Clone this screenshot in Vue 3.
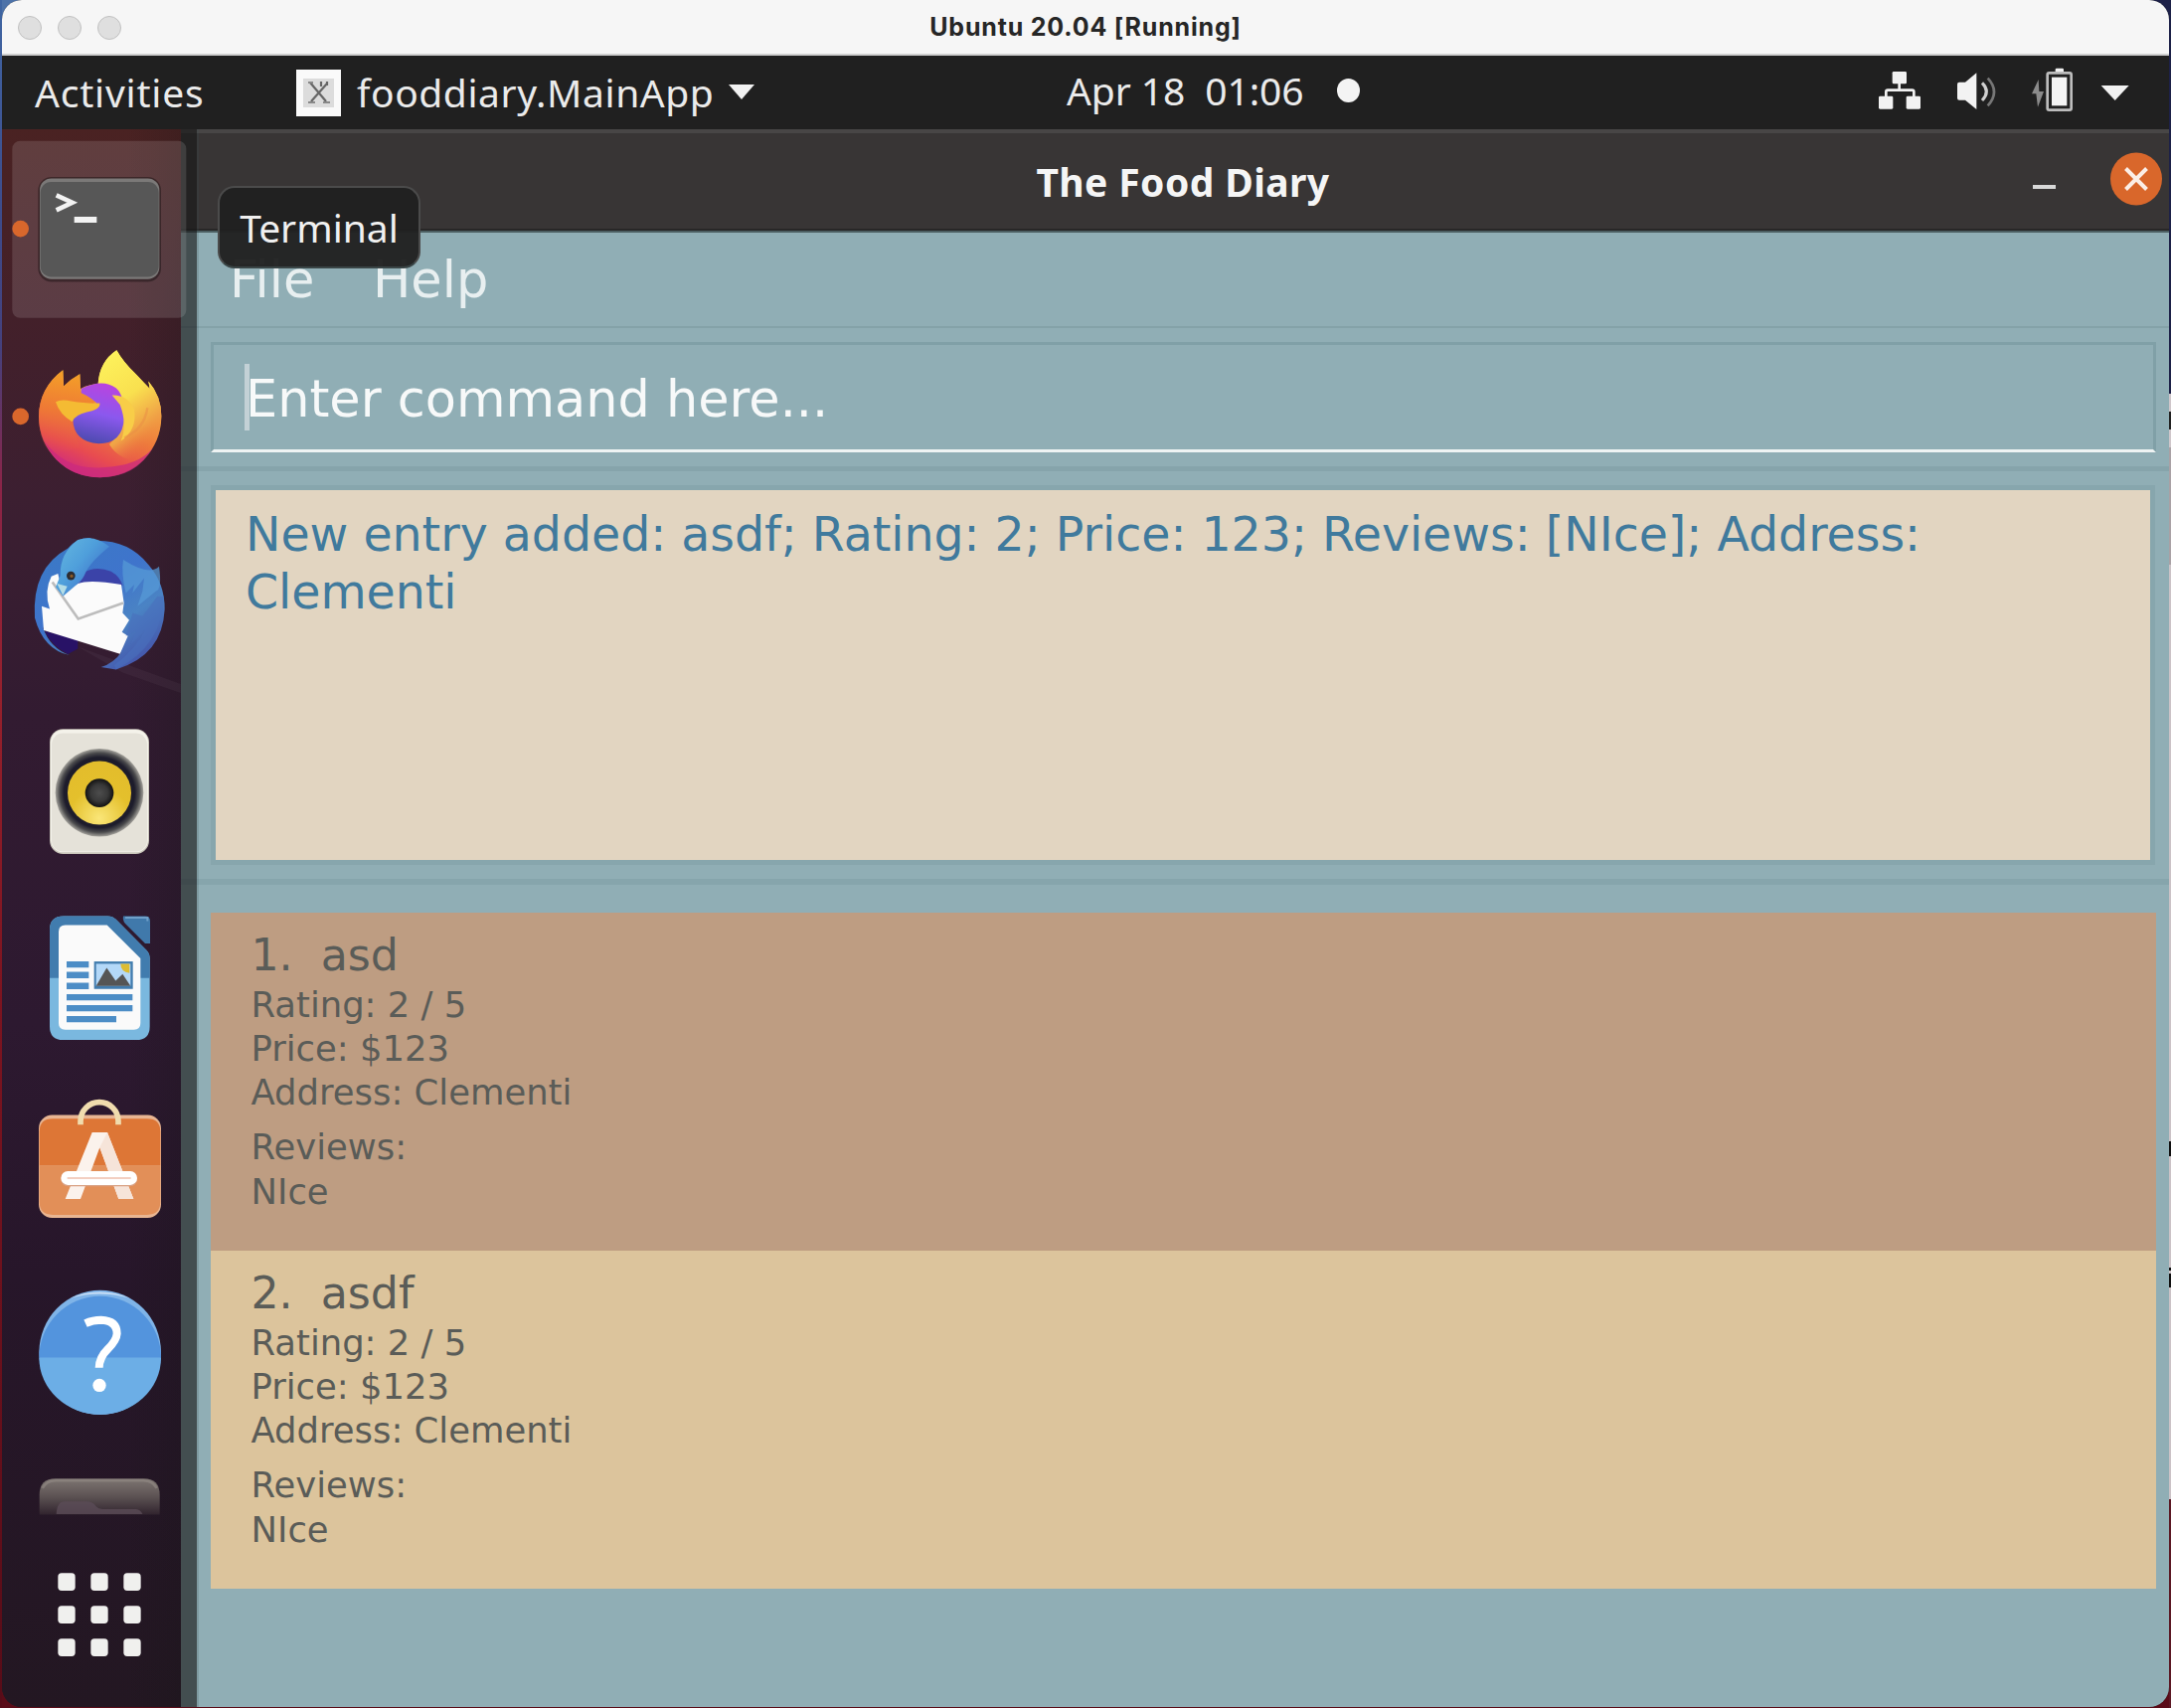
<script setup>
const entries = [
  { id: 1, name: 'asd', rating: 2, price: 123, address: 'Clementi', review: 'NIce' },
  { id: 2, name: 'asdf', rating: 2, price: 123, address: 'Clementi', review: 'NIce' },
]
const dots = [0, 1, 2]
</script>

<template>
  <div class="desktop">
    <div class="edge left"></div>
    <div class="vm">
      <header class="macbar">
        <div class="lights"><i></i><i></i><i></i></div>
        <span class="mactitle">Ubuntu 20.04 [Running]</span>
      </header>

      <div class="topbar">
        <span class="activities">Activities</span>
        <svg class="appicon" viewBox="0 0 45 47">
          <rect width="45" height="47" fill="#fafafa" />
          <rect x="7" y="9" width="31" height="29" fill="#dcdcdc" />
          <path d="M14 13l16 19M31 14L15 32M25 12v5M31 12v4" stroke="#666" stroke-width="2.2" fill="none" />
          <path d="M12 33h7M27 33h7M12 13h5" stroke="#888" stroke-width="2" />
        </svg>
        <span class="appname">fooddiary.MainApp</span>
        <svg class="caret" viewBox="0 0 28 18"><path d="M1 1h26L14 16z" fill="#f2f2f2" /></svg>
        <div class="clock"><span>Apr 18&nbsp; 01:06</span><i></i></div>
        <div class="status">
          <svg width="48" height="74" viewBox="261 168 144 222" fill="#f2f2f2">
            <rect x="311" y="216" width="43" height="37" rx="4" />
            <rect x="270" y="290" width="43" height="39" rx="4" />
            <rect x="353" y="290" width="43" height="39" rx="4" />
            <path d="M332 250v22M292 292v-15q0-5 5-5h74q5 0 5 5v15" fill="none" stroke="#f2f2f2" stroke-width="8" />
          </svg>
          <svg class="vol" width="48" height="74" viewBox="495 168 144 222" fill="none">
            <path d="M507 254q0-6 6-6h18l34-28v110l-34-28h-18q-6 0-6-6z" fill="#f2f2f2" />
            <path d="M582 250q26 26 0 53" stroke="#d0d0d0" stroke-width="9" />
            <path d="M599 236q38 41 0 83" stroke="#777" stroke-width="8" />
          </svg>
          <svg class="bat" width="48" height="74" viewBox="723 168 144 222">
            <path d="M752 240l-20 43h13l5 40 18-47h-14z" fill="#8b8b8b" />
            <rect x="803" y="206" width="25" height="14" rx="4" fill="#f2f2f2" />
            <rect x="779" y="220" width="72" height="112" rx="5" fill="none" stroke="#bdbdbd" stroke-width="8" />
            <rect x="792" y="233" width="46" height="86" fill="#f4f4f4" />
          </svg>
          <svg class="down" width="34" height="74" viewBox="933 168 102 222"><path d="M941 258h84l-42 45z" fill="#f2f2f2" /></svg>
        </div>
      </div>

      <div class="workspace">
        <aside class="dock">
          <!-- Terminal -->
          <svg class="slot" viewBox="6 18.75 540 565.5">
            <rect x="37" y="36" width="525" height="534" rx="24" fill="#fff" fill-opacity=".13" />
            <circle cx="62" cy="301" r="25" fill="#d9672c" />
            <rect x="115" y="145" width="371" height="316" rx="40" fill="#000" fill-opacity=".35" />
            <rect x="120" y="149" width="361" height="304" rx="35" fill="#7b7978" />
            <rect x="122" y="160" width="357" height="286" rx="32" fill="#575757" />
            <path d="M170 200l48 22-48 23" fill="none" stroke="#f3f3f3" stroke-width="14" />
            <path d="M224 274h68" stroke="#f3f3f3" stroke-width="18" />
          </svg>
          <!-- Firefox -->
          <svg class="slot" viewBox="6 584.25 540 565.5">
            <defs>
              <linearGradient id="fx" x1=".75" y1=".1" x2=".35" y2="1">
                <stop offset="0" stop-color="#fbe74f" /><stop offset=".3" stop-color="#f6b43c" />
                <stop offset=".55" stop-color="#ee7a3b" /><stop offset=".8" stop-color="#e84b50" /><stop offset="1" stop-color="#cf2a80" />
              </linearGradient>
              <linearGradient id="fy" x1=".2" y1="0" x2=".6" y2="1">
                <stop offset="0" stop-color="#fdf25c" /><stop offset=".45" stop-color="#f9e04f" />
                <stop offset=".75" stop-color="#f0a346" /><stop offset="1" stop-color="#e9603f" stop-opacity="0" />
              </linearGradient>
              <linearGradient id="fo" x1=".5" y1="0" x2=".4" y2="1">
                <stop offset="0" stop-color="#f4a127" /><stop offset=".5" stop-color="#ee7836" /><stop offset="1" stop-color="#e6504c" stop-opacity="0" />
              </linearGradient>
              <linearGradient id="fp" x1=".6" y1="0" x2=".4" y2="1">
                <stop offset="0" stop-color="#b944df" /><stop offset=".5" stop-color="#8b58ee" /><stop offset="1" stop-color="#4c4aae" />
              </linearGradient>
            </defs>
            <circle cx="62" cy="866" r="25" fill="#d9672c" />
            <path d="M190 726L192 775Q215 752 241 738L243 782Q270 768 296 768Q300 700 352 666Q372 702 410 738Q440 770 452 782L448 760Q487 805 487 865C487 970 405 1050 302 1050C198 1050 117 968 117 866Q118 780 190 726z" fill="url(#fx)" />
            <path d="M190 726L192 775Q215 752 241 738L243 790L290 820L215 880L240 960L150 980Q117 930 117 866Q118 780 190 726z" fill="url(#fo)" />
            <path d="M296 768Q300 700 352 666Q372 702 410 738Q440 770 452 782L448 760Q487 805 487 865Q485 950 425 1000Q360 1000 330 950Q380 900 365 830z" fill="url(#fy)" />
            <path d="M133 940Q200 1030 310 1020Q420 1015 462 960Q410 1050 302 1050Q185 1050 133 940z" fill="#cb2b7e" fill-opacity=".75" />
            <path d="M245 782Q310 750 350 780Q378 805 375 870Q370 948 298 948Q222 942 220 875L222 858L300 835Q280 810 245 795z" fill="url(#fp)" />
            <path d="M338 802Q385 800 405 845Q415 905 365 940Q385 890 362 830z" fill="#f8cd48" />
            <path d="M168 822Q185 812 215 820Q265 828 301 826Q304 845 262 853Q225 862 218 882Q180 860 168 822z" fill="#f4bb33" />
            <path d="M445 840Q435 905 375 930" fill="none" stroke="#e98c45" stroke-width="7" stroke-opacity=".5" />
          </svg>
          <!-- Thunderbird -->
          <svg class="slot" viewBox="6 39.75 540 565.5">
            <defs>
              <linearGradient id="tb" x1=".1" y1="0" x2=".8" y2="1">
                <stop offset="0" stop-color="#3a7ac5" /><stop offset=".45" stop-color="#3f74cc" /><stop offset=".7" stop-color="#4a83c4" /><stop offset="1" stop-color="#4450a8" />
              </linearGradient>
              <linearGradient id="th" x1=".1" y1="0" x2=".9" y2=".7">
                <stop offset="0" stop-color="#63b6e0" /><stop offset=".5" stop-color="#4f9fdb" /><stop offset="1" stop-color="#3f72ca" />
              </linearGradient>
            </defs>
            <path d="M235 452L545 565V592L370 530z" fill="#fff" fill-opacity=".04" />
            <path d="M205 155Q235 120 275 124L273 133Q385 125 448 205Q498 262 497 340Q490 480 350 521L305 514Q345 500 365 470L130 395Q150 455 210 478Q130 460 105 365Q95 215 205 155z" fill="url(#tb)" />
            <path d="M135 405L235 430V458L205 475Q155 450 135 405z" fill="#281266" />
            <path d="M205 275Q260 195 335 225Q362 240 370 268L340 262z" fill="#3b43a8" />
            <path d="M155 240L175 232L188 290L235 262Q270 248 366 265L374 320L370 350L390 372L368 408L386 420L362 474L132 403L126 330L150 338Q132 285 155 240z" fill="#fbfbfb" />
            <path d="M158 257L236 368L372 320" fill="none" stroke="#bdbdbd" stroke-width="8" />
            <path d="M235 262L190 300L168 272L182 238Q180 170 235 130Q285 112 330 150Q275 195 260 225Q250 250 235 262z" fill="url(#th)" />
            <path d="M172 262L203 270L190 298z" fill="#b5dde6" />
            <path d="M372 190Q365 230 380 290L405 265L400 290L435 245L430 285L415 330L470 285Q490 280 480 210Q450 240 372 190z" fill="#559ad6" fill-opacity=".75" />
            <path d="M495 300Q490 450 350 521L345 508Q410 460 440 400L395 445L410 405L380 420L400 350L430 360L475 300z" fill="#4a6fbd" fill-opacity=".6" />
            <circle cx="214" cy="238" r="13" fill="#2c2c30" /><circle cx="216" cy="239" r="5" fill="#8a5a26" />
          </svg>
          <!-- Rhythmbox -->
          <svg class="slot" viewBox="6 605.25 540 565.5">
            <defs>
              <radialGradient id="ry" cx=".5" cy=".9" r=".8"><stop offset="0" stop-color="#fae678" /><stop offset=".6" stop-color="#e4c02c" /><stop offset="1" stop-color="#e3bd2c" /></radialGradient>
              <radialGradient id="rk"><stop offset="0" stop-color="#4d4d4d" /><stop offset=".6" stop-color="#383838" /><stop offset="1" stop-color="#121212" /></radialGradient>
              <radialGradient id="ro"><stop offset=".8" stop-color="#1d1c2b" /><stop offset=".9" stop-color="#4a4a4c" /><stop offset="1" stop-color="#a5a39d" /></radialGradient>
            </defs>
            <rect x="150" y="699" width="300" height="377" rx="40" fill="#c9c5ba" />
            <rect x="153" y="701" width="294" height="370" rx="37" fill="#f4f2ea" />
            <rect x="156" y="712" width="288" height="357" rx="34" fill="#e5e2d9" />
            <circle cx="300" cy="891" r="133" fill="url(#ro)" />
            <circle cx="300" cy="892" r="96" fill="url(#ry)" />
            <circle cx="300" cy="892" r="43" fill="url(#rk)" />
          </svg>
          <!-- Writer -->
          <svg class="slot" viewBox="6 30.75 540 565.5">
            <path d="M192 125H325Q340 125 350 135L442 228Q452 238 452 252V458Q452 499 411 499H191Q150 499 150 458V166Q150 125 192 125z" fill="#7ab8df" />
            <path d="M192 125H325Q340 125 350 135L442 228Q452 238 452 252V312H150V166Q150 125 192 125z" fill="#417cae" />
            <path d="M372 125H438Q453 125 453 140V208H438L378 148Q370 138 372 125z" fill="#4079ab" />
            <path d="M378 130H445V140" fill="none" stroke="#6fa0c9" stroke-width="6" />
            <path d="M197 152H323L424 253V448Q424 468 404 468H197Q177 468 177 448V172Q177 152 197 152z" fill="#fafafa" />
            <path d="M201 271h67M201 303h67M201 336h67M201 370h199M201 403h199M201 436h150" stroke="#4c8dc6" stroke-width="19" />
            <rect x="284" y="262" width="117" height="83" fill="#417cae" />
            <rect x="290" y="269" width="104" height="67" fill="#b3d8f8" />
            <path d="M364 269h27v28q-27-4-27-28z" fill="#dcbc32" />
            <path d="M290 336L322 281L349 320L370 300L394 336z" fill="#555" />
          </svg>
          <!-- Ubuntu Software -->
          <svg class="slot" viewBox="6 596.25 540 565.5">
            <rect x="117" y="724" width="369" height="310" rx="40" fill="#e8b592" />
            <path d="M119 877V775Q119 735 159 735H444Q484 735 484 775V877z" fill="#dd7636" />
            <path d="M119 877H484V985Q484 1025 444 1025H159Q119 1025 119 985z" fill="#e28f58" />
            <path d="M243 753V742a57 57 0 0 1 114 0V753" fill="none" stroke="#f0dcae" stroke-width="17" />
            <path d="M278 776H324L403 977H358L301 822L243 977H197z" fill="#fbf2ec" />
            <path d="M324 776L403 977H358L301 822z" fill="#f6e4d9" />
            <rect x="184" y="897" width="230" height="42" rx="21" fill="#d9a184" />
            <rect x="184" y="893" width="230" height="42" rx="21" fill="#fff" />
            <path d="M203 914h192" stroke="#f3cfc1" stroke-width="6" />
          </svg>
          <!-- Help -->
          <svg class="slot" viewBox="6 21.75 540 565.5">
            <ellipse cx="302" cy="302" rx="184" ry="188" fill="#7fb4e8" />
            <path d="M118 318A184 186 0 1 1 486 318z" fill="#5394dd" />
            <path d="M118 318H486A184 171 0 0 1 118 318z" fill="#6caee6" />
            <path d="M212 138Q300 100 392 138Q300 112 212 138z" fill="#c9def5" />
            <path d="M258 214Q280 204 305 204Q353 206 353 245Q352 266 325 292Q300 316 299 348" fill="none" stroke="#fff" stroke-width="24" />
            <circle cx="300" cy="401" r="20" fill="#fff" />
          </svg>
          <!-- Files, fading out at the end of the list -->
          <svg class="slot half" viewBox="6 587.25 540 240">
            <defs><linearGradient id="fl" x1="0" y1="0" x2="0" y2="1"><stop offset="0" stop-color="#7d7571" /><stop offset=".5" stop-color="#5c5253" /><stop offset="1" stop-color="#31242e" /></linearGradient></defs>
            <path d="M119 790V730Q119 681 168 681H433Q482 681 482 730V790z" fill="url(#fl)" />
            <path d="M128 710Q140 687 168 687H433Q461 687 473 710" fill="none" stroke="#948c87" stroke-opacity=".6" stroke-width="8" />
            <path d="M170 788Q172 750 195 750H262Q280 750 290 765Q297 773 310 773H410Q425 774 430 788z" fill="#5b4c57" fill-opacity=".8" />
          </svg>
          <!-- Show applications -->
          <svg class="slot apps" viewBox="6 827.25 540 546.75" fill="#f0f0ee">
            <template v-for="r in dots" :key="r">
              <rect v-for="c in dots" :key="c" :x="175 + c * 99" :y="966 + r * 99" width="52" height="53" rx="11" />
            </template>
          </svg>
        </aside>

        <main class="app">
          <div class="titlebar">
            <span class="apptitle">The Food Diary</span>
            <div class="controls">
              <i class="min"></i>
              <svg width="52" height="54" viewBox="0 0 52 54">
                <ellipse cx="26" cy="27" rx="26" ry="26.5" fill="#d9672b" />
                <path d="M15.500 16.500l21 21M36.500 16.500l-21 21" stroke="#fbeee6" stroke-width="4" />
              </svg>
            </div>
          </div>
          <nav class="menu"><span>File</span><span>Help</span></nav>
          <section class="cmdwrap">
            <div class="cmd"><i class="cursor"></i><span>Enter command here...</span></div>
          </section>
          <section class="reswrap">
            <div class="result">
              <p>New entry added: asdf; Rating: 2; Price: 123; Reviews: [NIce]; Address:<br />Clementi</p>
            </div>
          </section>
          <section class="list">
            <article v-for="e in entries" :key="e.id" class="card">
              <h2>{{ e.id }}.&nbsp; {{ e.name }}</h2>
              <p>Rating: {{ e.rating }} / 5</p>
              <p>Price: ${{ e.price }}</p>
              <p>Address: {{ e.address }}</p>
              <p class="reviews">Reviews:</p>
              <p>{{ e.review }}</p>
            </article>
          </section>
          <div class="shade"></div>
          <div class="tooltip">Terminal</div>
        </main>
      </div>
    </div>
    <div class="edge right"></div>
  </div>
</template>

<style>
body { margin: 0; overflow: hidden; }
</style>

<style scoped>
.desktop {
  display: grid;
  grid-template-columns: 2px 1fr 2px;
  width: 2184px;
  height: 1718px;
  background: linear-gradient(90deg, #4d72a8 0 50%, #1d2148 50%) 0 0 / 100% 60px no-repeat, #5a0c18;
}
.edge.left { background: linear-gradient(#3f66a3, #3d4a8a 220px, #45407c 350px, #8a2447 490px, #95202c 700px, #7c1420 1000px, #560c18 1718px); }
.edge.right {
  background: linear-gradient(
    #1d2148 0 396px, #cfc6ca 396px 414px, #222 414px 432px, #cfc6ca 432px 450px, #a9a1a5 450px 568px, #cbc2c6 568px 1148px,
    #111 1148px 1163px, #cbc2c6 1163px 1275px, #111 1275px 1278px, #cbc2c6 1278px 1281px, #111 1281px 1295px, #cbc2c6 1295px 1508px, #5c1824 1508px);
}
.vm {
  display: flex;
  flex-direction: column;
  height: 1717px;
  overflow: hidden;
  border-radius: 20px;
  background: #202020;
}
.macbar {
  display: flex;
  align-items: center;
  justify-content: center;
  box-sizing: border-box;
  height: 56px;
  flex: none;
  position: relative;
  background: #f6f6f6;
  border-bottom: 2px solid #cfcfcf;
}
.lights { position: absolute; left: 16px; top: 16px; display: flex; gap: 16px; }
.lights i { box-sizing: border-box; width: 24px; height: 24px; border-radius: 50%; background: #dfdfdf; border: 1px solid #c0c0c0; }
.mactitle { font: 700 25px/54px Inter, sans-serif; color: #262626; letter-spacing: 0.82px; white-space: nowrap; }
.topbar {
  display: flex;
  align-items: center;
  flex: none;
  height: 74px;
  position: relative;
  padding-left: 33px;
  background: #202020;
  color: #ebebeb;
  font: 39px/74px "Noto Sans", sans-serif;
  white-space: nowrap;
}
.activities { width: 263px; letter-spacing: 0.8px; }
.appicon { width: 45px; height: 47px; margin-right: 16px; }
.appname { width: 358px; letter-spacing: 0.57px; }
.caret { width: 28px; height: 18px; margin-left: 15px; }
.clock { position: absolute; left: 1071px; top: -2px; display: flex; align-items: center; }
.clock span { width: 272px; letter-spacing: -0.1px; }
.clock i { width: 23px; height: 24px; border-radius: 50%; background: #f4f4f4; }
.status { display: flex; margin-left: auto; padding-right: 37px; }
.vol { margin-left: 30px; }
.bat { margin-left: 28px; }
.down { margin-left: 22px; }
.workspace { display: flex; flex: 1; min-height: 0; }
.dock {
  display: flex;
  flex-direction: column;
  flex: none;
  box-sizing: border-box;
  width: 180px;
  padding-top: 6.25px;
  position: relative;
  z-index: 2;
  background:
    linear-gradient(90deg, transparent 70%, rgba(20, 20, 20, 0.2)),
    linear-gradient(#4a2222, #43202a 190px, #3c1f31 370px, #321b31 590px, #2d1930 900px, #27162a 1150px, #231722 1588px);
}
.slot { display: block; flex: none; width: 180px; height: 188.5px; overflow: visible; }
.slot.half { height: 80px; }
.slot.apps { height: 182.25px; }
.app {
  display: flex;
  flex-direction: column;
  flex: 1;
  min-width: 0;
  position: relative;
  background: #90aeb5;
  font-family: "DejaVu Sans", sans-serif;
}
.shade {
  position: absolute;
  left: 0;
  top: 0;
  bottom: 0;
  width: 16px;
  background: rgba(24, 24, 24, 0.64);
  background-clip: padding-box;
  border-right: 2px solid rgba(60, 80, 84, 0.2);
}
.titlebar {
  display: flex;
  align-items: center;
  justify-content: center;
  flex: none;
  box-sizing: border-box;
  height: 104px;
  position: relative;
  padding-left: 16px;
  background: #383535;
  border-top: 4px solid #484646;
  border-bottom: 2px solid #4c5f62;
  box-shadow: inset 0 -2px #282727;
}
.apptitle { font: 700 39px/96px "Noto Sans", sans-serif; color: #f5f5f5; letter-spacing: 0.4px; white-space: nowrap; }
.controls { position: absolute; right: 7px; top: 19px; display: flex; align-items: center; gap: 55px; }
.min { width: 23px; height: 4px; margin-top: 15px; background: #d8d8d8; }
.menu {
  display: flex;
  box-sizing: border-box;
  flex: none;
  height: 96px;
  padding-left: 49px;
  border-bottom: 2px solid #84a2a8;
  font-size: 51px;
  line-height: 95px;
  color: #e8eff0;
}
.menu span:first-child { width: 144px; }
.cmdwrap { box-sizing: border-box; flex: none; height: 144px; padding: 14px 13px 0 30px; border-bottom: 5px solid #86a4ab; }
.cmd {
  display: flex;
  align-items: center;
  box-sizing: border-box;
  height: 111px;
  position: relative;
  padding-left: 32px;
  border: 3px solid #80a0a7;
  border-bottom-color: #eef3f3;
  color: #f7f9f9;
  font-size: 50.9px;
  line-height: 105px;
  white-space: nowrap;
}
.cmd span { margin-top: 4px; }
.cursor { position: absolute; left: 31px; top: 19px; width: 5px; height: 67px; background: #c3d1d6; }
.reswrap { box-sizing: border-box; flex: none; height: 416px; padding: 14px 14px 0 30px; border-bottom: 6px solid #86a5ac; }
.result {
  box-sizing: border-box;
  height: 382px;
  border: 5px solid #87a6ad;
  background: #e2d5c1;
  color: #407a9d;
  padding: 16px 0 0 30px;
}
.result p { margin: 0; font-size: 47.4px; line-height: 58px; white-space: nowrap; }
.list { padding: 28px 13px 0 30px; }
.card { box-sizing: border-box; height: 340px; padding: 17px 0 0 40.500px; background: #be9d82; color: #5a5c58; }
.card:nth-child(2) { background: #dcc49c; }
.card h2 { margin: 0 0 2.500px; font-size: 44.2px; font-weight: 400; line-height: 51px; }
.card p { margin: 0; font-size: 35.4px; line-height: 44.3px; }
.card .reviews { margin-top: 11px; }
.tooltip {
  position: absolute;
  z-index: 3;
  left: 37px;
  top: 57px;
  box-sizing: border-box;
  width: 204px;
  height: 83px;
  border: 2px solid #4b4b4b;
  border-bottom-color: #3a4546;
  border-radius: 17px;
  background: rgba(32, 32, 32, 0.96);
  color: #f0f0f0;
  font: 39px/79px "Noto Sans", sans-serif;
  text-align: center;
}
</style>
